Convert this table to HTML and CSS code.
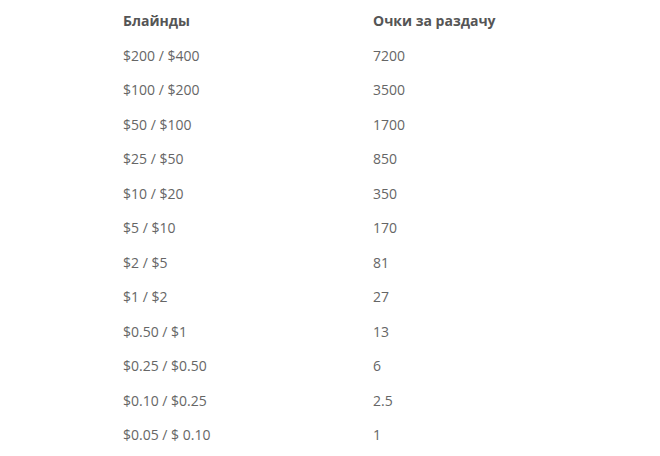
FILE: index.html
```html
<!DOCTYPE html>
<html lang="ru">
<head>
<meta charset="utf-8">
<title>Очки за раздачу</title>
<link rel="stylesheet" href="styles.css">
</head>
<body>
<div class="points-table">
  <div class="cell head">Блайнды</div><div class="cell head">Очки за раздачу</div>
  <div class="cell">$200 / $400</div><div class="cell">7200</div>
  <div class="cell">$100 / $200</div><div class="cell">3500</div>
  <div class="cell">$50 / $100</div><div class="cell">1700</div>
  <div class="cell">$25 / $50</div><div class="cell">850</div>
  <div class="cell">$10 / $20</div><div class="cell">350</div>
  <div class="cell">$5 / $10</div><div class="cell">170</div>
  <div class="cell">$2 / $5</div><div class="cell">81</div>
  <div class="cell">$1 / $2</div><div class="cell">27</div>
  <div class="cell">$0.50 / $1</div><div class="cell">13</div>
  <div class="cell">$0.25 / $0.50</div><div class="cell">6</div>
  <div class="cell">$0.10 / $0.25</div><div class="cell">2.5</div>
  <div class="cell">$0.05 / $ 0.10</div><div class="cell">1</div>
</div>
</body>
</html>
```
FILE: styles.css
```css
html, body {
  margin: 0;
  padding: 0;
  background: #ffffff;
}
body {
  font-family: "Open Sans", "Liberation Sans", sans-serif;
  font-size: 14px;
  color: #666666;
}
.points-table {
  display: grid;
  grid-template-columns: 250px 200px;
  padding: 4px 0 0 123px;
}
.cell {
  line-height: 34.5px;
  white-space: nowrap;
}
.head {
  font-weight: 700;
  color: #555555;
}
```
